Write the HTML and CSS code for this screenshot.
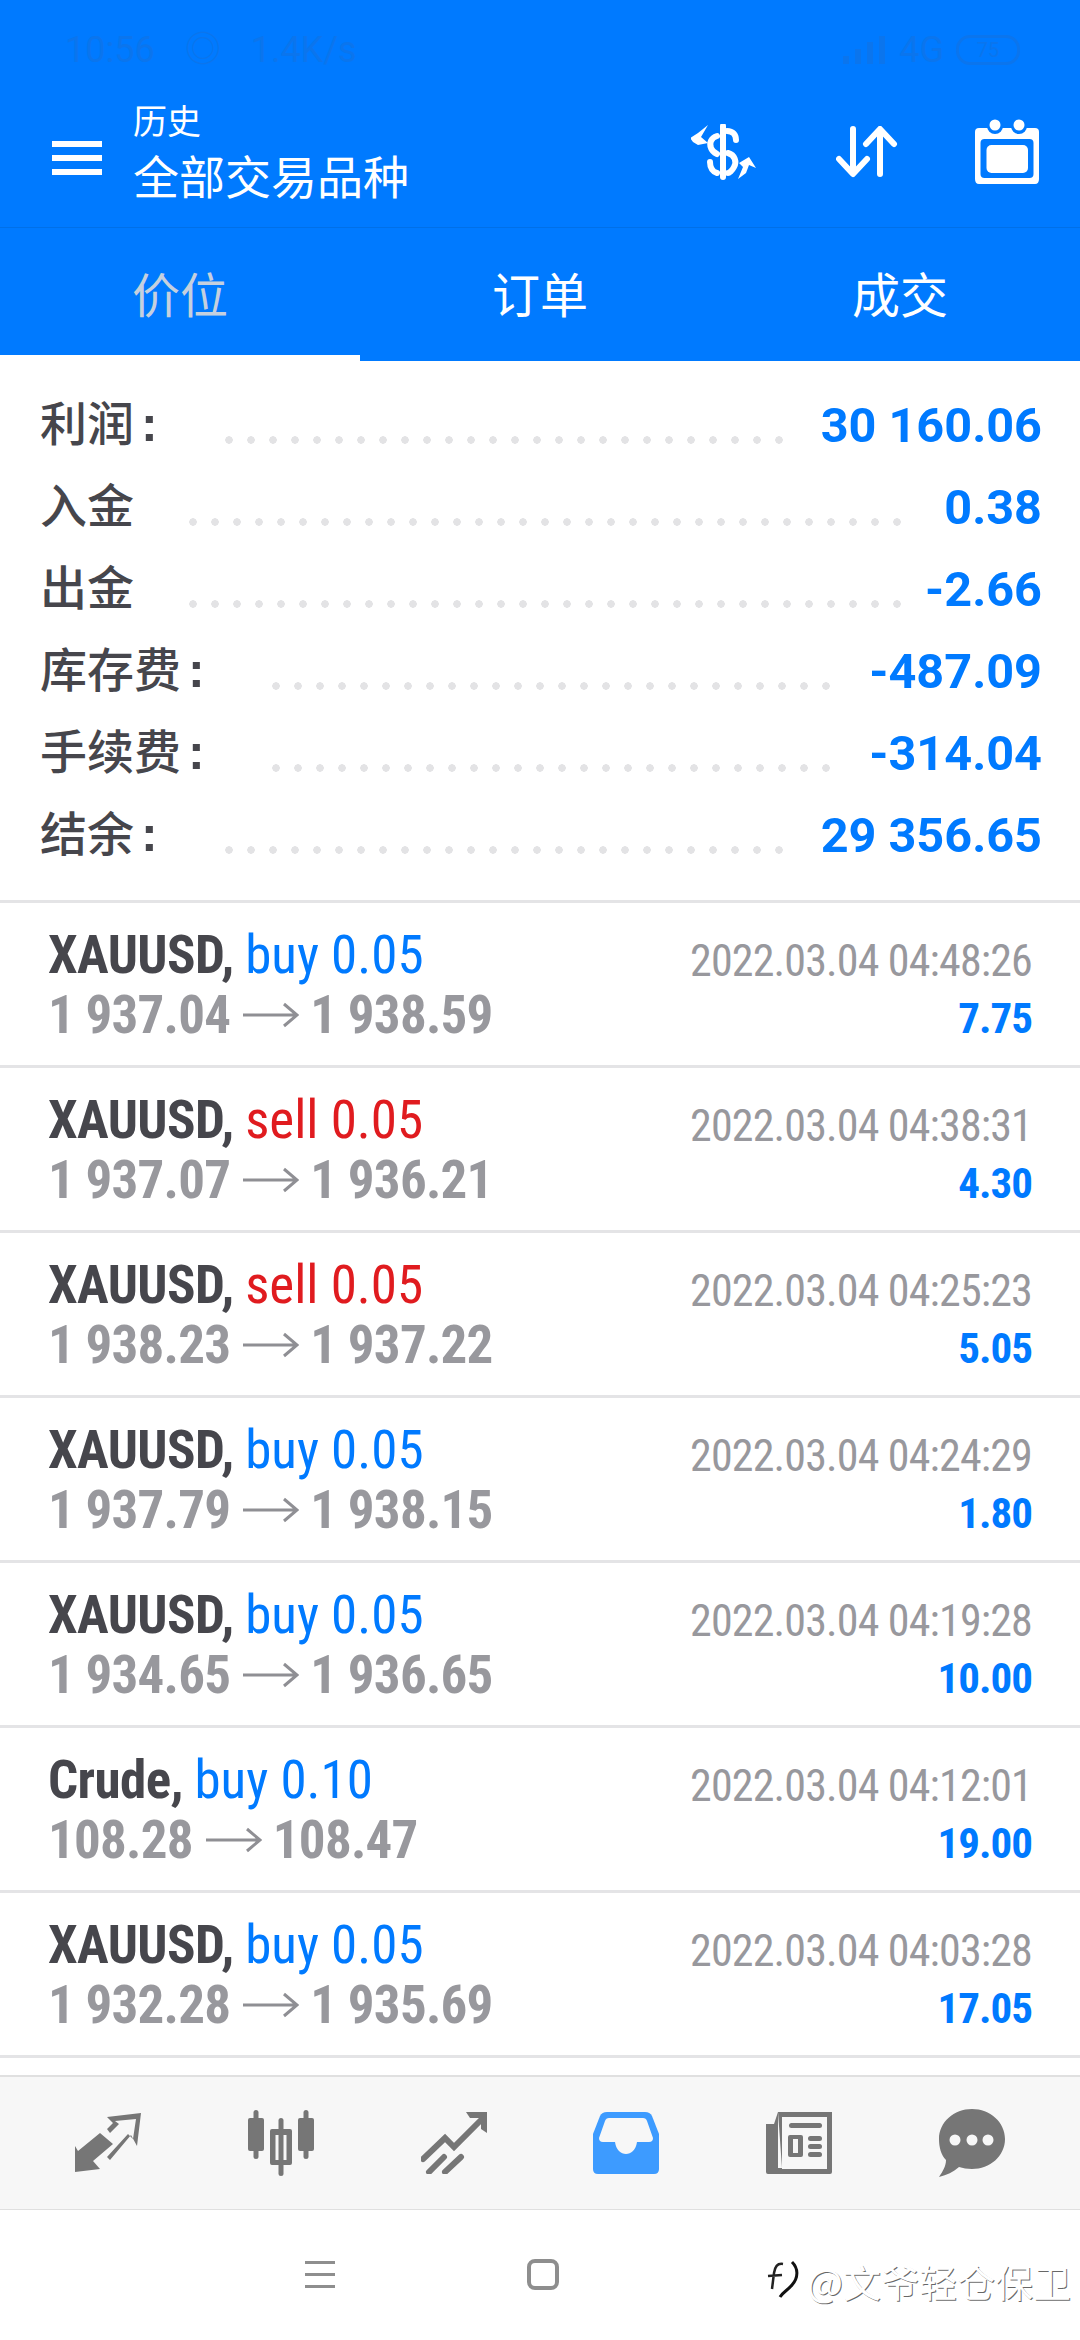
FILE: index.html
```html
<!DOCTYPE html>
<html lang="zh-CN">
<head>
<meta charset="utf-8">
<title>历史</title>
<link rel="stylesheet" href="styles.css">
</head>
<body>
<div class="phone">
  <header class="header">
    <div class="status">
      <div class="status-left"><span>10:56</span><span class="status-glyph">◎</span><span>1.4K/s</span></div>
      <div class="status-right"><svg width="44" height="28" viewBox="0 0 44 28"><path fill="#0b75ed" d="M0 20h6v8H0zM12 13h6v15h-6zM24 6h6v22h-6zM36 0h6v28h-6z"/></svg><span>4G</span><span class="battery">75</span></div>
    </div>
    <div class="toolbar">
      <button class="menu" aria-label="菜单"><i></i><i></i><i></i></button>
      <div class="titles">
        <div class="title-small">历史</div>
        <div class="title-main">全部交易品种</div>
      </div>
      <div class="actions">
        <div class="action">
          <svg width="65" height="56" viewBox="0 0 65 56"><g fill="none" stroke="#fff" stroke-width="6" stroke-linecap="round"><path d="M32 2V53"/><path d="M36 7C42 7 45 11 45 16"/><path d="M26 12C20 14 18 19 20 24 21 27 24 29 26 30"/><path d="M37 29C44 31 46 38 43 43 41 47 38 49 37 49"/><path d="M19 38C19 44 22 48 26 49"/></g><path fill="#fff" d="M-1 14L7 9 17 1 10 13 17 19 7 21 2 18Z"/><path fill="#fff" d="M47 55L52 43 48 39 58 33 65 44 58 41 55 49Z"/></svg>
        </div>
        <div class="action action-arrows">
          <svg width="62" height="52" viewBox="0 0 62 52"><g fill="none" stroke="#fff" stroke-width="6" stroke-linecap="round" stroke-linejoin="round"><path d="M17 3V47M3 33L17 48 31 33"/><path d="M44 48V4M30 18L44 3 58 18"/></g></svg>
        </div>
        <div class="action">
          <svg width="64" height="65" viewBox="0 0 64 65"><path fill="#fff" d="M4 9H60Q64 9 64 13V60Q64 65 60 65H4Q0 65 0 60V13Q0 9 4 9Z"/><g fill="#007aff"><circle cx="20" cy="7" r="8"/><circle cx="44" cy="7" r="8"/><rect x="5.500" y="20" width="53" height="39" rx="4"/></g><g fill="#fff"><circle cx="20" cy="6" r="5.500"/><circle cx="44" cy="6" r="5.500"/><rect x="11.500" y="26" width="41.500" height="28" rx="5"/></g></svg>
        </div>
      </div>
    </div>
    <nav class="tabs">
      <div class="tab tab-active">价位</div>
      <div class="tab">订单</div>
      <div class="tab">成交</div>
    </nav>
  </header>

  <main class="content">
    <section class="summary">
      <div class="sum-row"><span class="sum-label">利润<b>:</b></span><span class="leader leader-a"></span><span class="sum-value">30 160.06</span></div>
      <div class="sum-row"><span class="sum-label">入金</span><span class="leader leader-b"></span><span class="sum-value">0.38</span></div>
      <div class="sum-row"><span class="sum-label">出金</span><span class="leader leader-b"></span><span class="sum-value">-2.66</span></div>
      <div class="sum-row"><span class="sum-label">库存费<b>:</b></span><span class="leader leader-a"></span><span class="sum-value">-487.09</span></div>
      <div class="sum-row"><span class="sum-label">手续费<b>:</b></span><span class="leader leader-a"></span><span class="sum-value">-314.04</span></div>
      <div class="sum-row"><span class="sum-label">结余<b>:</b></span><span class="leader leader-a"></span><span class="sum-value">29 356.65</span></div>
    </section>

    <section class="deals">
      <article class="deal">
        <div class="deal-left">
          <div class="deal-head"><b>XAUUSD,</b> <span class="buy">buy 0.05</span></div>
          <div class="deal-prices">1 937.04<svg class="arrow" width="56" height="28" viewBox="0 0 56 28"><path d="M0 14H54M41 3L54 14 41 25" fill="none" stroke="#8f8f94" stroke-width="3"/></svg>1 938.59</div>
        </div>
        <div class="deal-right"><div class="deal-time">2022.03.04 04:48:26</div><div class="deal-profit">7.75</div></div>
      </article>
      <article class="deal">
        <div class="deal-left">
          <div class="deal-head"><b>XAUUSD,</b> <span class="sell">sell 0.05</span></div>
          <div class="deal-prices">1 937.07<svg class="arrow" width="56" height="28" viewBox="0 0 56 28"><path d="M0 14H54M41 3L54 14 41 25" fill="none" stroke="#8f8f94" stroke-width="3"/></svg>1 936.21</div>
        </div>
        <div class="deal-right"><div class="deal-time">2022.03.04 04:38:31</div><div class="deal-profit">4.30</div></div>
      </article>
      <article class="deal">
        <div class="deal-left">
          <div class="deal-head"><b>XAUUSD,</b> <span class="sell">sell 0.05</span></div>
          <div class="deal-prices">1 938.23<svg class="arrow" width="56" height="28" viewBox="0 0 56 28"><path d="M0 14H54M41 3L54 14 41 25" fill="none" stroke="#8f8f94" stroke-width="3"/></svg>1 937.22</div>
        </div>
        <div class="deal-right"><div class="deal-time">2022.03.04 04:25:23</div><div class="deal-profit">5.05</div></div>
      </article>
      <article class="deal">
        <div class="deal-left">
          <div class="deal-head"><b>XAUUSD,</b> <span class="buy">buy 0.05</span></div>
          <div class="deal-prices">1 937.79<svg class="arrow" width="56" height="28" viewBox="0 0 56 28"><path d="M0 14H54M41 3L54 14 41 25" fill="none" stroke="#8f8f94" stroke-width="3"/></svg>1 938.15</div>
        </div>
        <div class="deal-right"><div class="deal-time">2022.03.04 04:24:29</div><div class="deal-profit">1.80</div></div>
      </article>
      <article class="deal">
        <div class="deal-left">
          <div class="deal-head"><b>XAUUSD,</b> <span class="buy">buy 0.05</span></div>
          <div class="deal-prices">1 934.65<svg class="arrow" width="56" height="28" viewBox="0 0 56 28"><path d="M0 14H54M41 3L54 14 41 25" fill="none" stroke="#8f8f94" stroke-width="3"/></svg>1 936.65</div>
        </div>
        <div class="deal-right"><div class="deal-time">2022.03.04 04:19:28</div><div class="deal-profit">10.00</div></div>
      </article>
      <article class="deal">
        <div class="deal-left">
          <div class="deal-head"><b>Crude,</b> <span class="buy">buy 0.10</span></div>
          <div class="deal-prices">108.28<svg class="arrow" width="56" height="28" viewBox="0 0 56 28"><path d="M0 14H54M41 3L54 14 41 25" fill="none" stroke="#8f8f94" stroke-width="3"/></svg>108.47</div>
        </div>
        <div class="deal-right"><div class="deal-time">2022.03.04 04:12:01</div><div class="deal-profit">19.00</div></div>
      </article>
      <article class="deal">
        <div class="deal-left">
          <div class="deal-head"><b>XAUUSD,</b> <span class="buy">buy 0.05</span></div>
          <div class="deal-prices">1 932.28<svg class="arrow" width="56" height="28" viewBox="0 0 56 28"><path d="M0 14H54M41 3L54 14 41 25" fill="none" stroke="#8f8f94" stroke-width="3"/></svg>1 935.69</div>
        </div>
        <div class="deal-right"><div class="deal-time">2022.03.04 04:03:28</div><div class="deal-profit">17.05</div></div>
      </article>
    </section>
  </main>

  <nav class="tabbar">
    <div class="tabbar-item">
      <svg width="66" height="60" viewBox="0 0 66 60"><g fill="#767676"><path d="M0 33L3 38 25 20 38 31 18 48 25 56 0 59Z"/><path d="M32 4L66 0 62 33 56 22 35 47 32 44 53 21 58 26 61 6 40 8 44 11 35 20 32 16 38 10Z"/></g></svg>
    </div>
    <div class="tabbar-item">
      <svg width="66" height="66" viewBox="0 0 66 66"><g fill="#767676" fill-rule="evenodd"><rect x="5.500" y="0" width="5" height="49" rx="2.500"/><rect x="0" y="8" width="16" height="33" rx="2"/><rect x="55.500" y="0" width="5" height="49" rx="2.500"/><rect x="50" y="8" width="16" height="33" rx="2"/><rect x="30.500" y="8" width="5" height="58" rx="2.500"/><path d="M24 19H42Q44 19 44 21V53Q44 55 42 55H24Q22 55 22 53V21Q22 19 24 19ZM27.500 25V50H38.500V25Z"/></g></svg>
    </div>
    <div class="tabbar-item">
      <svg width="66" height="62" viewBox="0 0 66 62"><g fill="none" stroke="#767676" stroke-width="6"><path d="M2 47L24 26 33 35 62 6" stroke-linecap="round"/><path d="M8 60L23 45M24 60L40 45" stroke-linecap="round"/></g><path fill="#767676" d="M45 0H66V21L60 17V6H49Z"/></svg>
    </div>
    <div class="tabbar-item">
      <svg width="66" height="62" viewBox="0 0 66 62"><path fill="#3d9bff" d="M14 0H52Q57 0 59 4L66 22V57Q66 62 61 62H5Q0 62 0 57V22L7 4Q9 0 14 0Z"/><path fill="#f7f7f7" d="M16 6H50Q53 6 54 9L60 26Q60 30 56 30H44C42 46 24 46 22 30H10Q6 30 6 26L12 9Q13 6 16 6Z"/></svg>
    </div>
    <div class="tabbar-item">
      <svg width="66" height="62" viewBox="0 0 66 62"><g fill="#767676"><path fill-rule="evenodd" d="M12 0H66V60Q66 62 64 62H2Q0 62 0 60V12H8V56H16V5H61V57H16V56ZM12 0V56H8V12Z"/><rect x="23" y="11" width="33" height="5" rx="2.500"/><path fill-rule="evenodd" d="M24 23H35Q37 23 37 25V43Q37 45 35 45H24Q22 45 22 43V25Q22 23 24 23ZM27 27V41H32V27Z"/><rect x="42" y="24" width="14" height="5" rx="2.500"/><rect x="42" y="32" width="14" height="5" rx="2.500"/><rect x="42" y="40" width="14" height="5" rx="2.500"/></g></svg>
    </div>
    <div class="tabbar-item">
      <svg width="66" height="68" viewBox="0 0 66 68"><path fill="#767676" d="M33 0C51 0 66 13 66 30S51 60 33 60C28 60 24 59 20 58 14 63 8 66 0 68 4 62 7 57 7 51 2 46 0 38 0 30 0 13 15 0 33 0Z"/><g fill="#f7f7f7"><circle cx="16" cy="31" r="5.500"/><circle cx="33" cy="31" r="5.500"/><circle cx="49" cy="31" r="5.500"/></g></svg>
    </div>
  </nav>

  <footer class="sysbar">
    <div class="sys-menu"><i></i><i></i><i></i></div>
    <div class="sys-home"></div>
    <div class="watermark"><svg class="wm-logo" width="34" height="44" viewBox="0 0 34 44"><path d="M27 3C33 9 34 18 27 26 23 31 18 33 15 38" fill="none" stroke="#111" stroke-width="3"/><path d="M18 5C12 4 10 8 9 14L7 30M3 17L17 16" fill="none" stroke="#222" stroke-width="2.500"/></svg><span class="wm-text">@文爷轻仓保卫</span></div>
  </footer>
</div>
</body>
</html>
```
FILE: styles.css
```css
* { box-sizing: border-box; }
html, body { margin: 0; padding: 0; }
body { background: #fff; font-family: "Noto Sans CJK SC", "Noto Sans", sans-serif; }

.phone { width: 1080px; height: 2340px; display: flex; flex-direction: column; overflow: hidden; position: relative; }

/* header */
.header { background: #007aff; color: #fff; height: 361px; flex: none; display: flex; flex-direction: column; }
.status { height: 88px; padding: 27px 60px 0 65px; display: flex; justify-content: space-between; color: #0b75ed; font: 400 36px/46px Roboto, sans-serif; }
.status-left { display: flex; gap: 30px; }
.status-right { display: flex; gap: 12px; align-items: center; height: 46px; }
.battery { border: 3px solid #0b75ed; border-radius: 14px; width: 64px; height: 30px; font-size: 20px; line-height: 24px; text-align: center; }
.toolbar { height: 140px; display: flex; align-items: center; border-bottom: 1px solid #0070e8; }
.menu { width: 133px; padding: 0 0 0 52px; border: 0; background: none; display: flex; flex-direction: column; gap: 8px; }
.menu i { display: block; width: 50px; height: 6px; background: #fff; }
.titles { flex: 1; padding-bottom: 13px; display: flex; flex-direction: column; gap: 4px; }
.title-small { font-size: 34px; line-height: 42px; }
.title-main { font-size: 46px; line-height: 58px; }
.actions { display: flex; padding: 0 2px 12px 0; }
.action { width: 142px; display: flex; justify-content: center; align-items: center; }
.action-arrows { padding-left: 4px; }
.tabs { flex: 1; display: flex; }
.tab { flex: 1; display: flex; justify-content: center; align-items: center; font-size: 48px; border-bottom: 6px solid transparent; }
.tab-active { color: #c5d0de; border-bottom-color: #fff; }

/* summary */
.content { flex: 1; min-height: 0; overflow: hidden; }
.summary { height: 542px; padding: 23px 38px 0 40px; border-bottom: 3px solid #e4e4e6; }
.sum-row { height: 82px; display: flex; align-items: center; }
.sum-label { font-size: 47px; line-height: 74px; font-weight: 500; color: #46464c; white-space: nowrap; height: 82px; }
.sum-label b { font: 700 50px/74px "Liberation Sans", sans-serif; margin-left: 7px; }
.sum-value { margin-left: auto; padding-top: 3px; font: 700 48.600px/1 Roboto, sans-serif; color: #007aff; }
.leader { align-self: flex-start; height: 14px; margin-top: 49px; background: radial-gradient(circle at 11px 7px, #e3e3e5 3.500px, transparent 4px) 0 0 / 22px 14px repeat-x; }
.leader-a { margin-left: 60px; width: 572px; }
.leader-b { margin-left: 48px; width: 726px; }

/* deals */
.deal { height: 165px; border-bottom: 3px solid #e4e4e6; padding: 0 48px 0 48px; display: flex; justify-content: space-between; align-items: center; font-family: "Roboto Condensed", Roboto, sans-serif; }
.deal-left { padding-top: 2px; }
.deal-head { font-size: 53px; line-height: 60px; letter-spacing: -0.600px; color: #46464c; white-space: nowrap; }
.deal-head b { font-weight: 700; }
.buy, .sell { letter-spacing: 0; }
.buy { color: #007aff; }
.sell { color: #e01b1f; }
.deal-prices { font-size: 53px; line-height: 60px; letter-spacing: -0.750px; font-weight: 700; color: #98989d; white-space: nowrap; display: flex; align-items: center; }
.arrow { margin: 0 11px 0 13px; flex: none; }
.deal-right { text-align: right; padding-top: 8px; display: flex; flex-direction: column; }
.deal-time { font-size: 44px; line-height: 60px; letter-spacing: -0.840px; color: #98989d; padding-top: 3px; margin-bottom: -3px; }
.deal-profit { font-size: 43px; line-height: 60px; letter-spacing: -1px; font-weight: 700; color: #007aff; }

/* tab bar */
.tabbar { height: 135px; flex: none; background: #f7f7f7; border-top: 2px solid #e0e0e0; border-bottom: 1px solid #e0e0e0; padding: 0 22px; display: flex; }
.tabbar-item { flex: 1; display: flex; justify-content: center; align-items: center; }

/* system bar */
.sysbar { height: 130px; flex: none; background: #fff; position: relative; display: flex; }
.sys-menu { position: absolute; left: 305px; top: 51px; width: 30px; height: 27px; display: flex; flex-direction: column; justify-content: space-between; }
.sys-menu i { display: block; height: 3px; background: #8e8e8e; }
.sys-home { position: absolute; left: 527px; top: 49px; width: 32px; height: 31px; border: 4px solid #8e8e8e; border-radius: 8px; }
.watermark { position: absolute; left: 765px; top: 46px; display: flex; align-items: center; gap: 8px; }
.wm-text { font-size: 38px; line-height: 50px; color: #fff; text-shadow: 1px 1px 0 rgba(0, 0, 0, 0.6); white-space: nowrap; }
```
